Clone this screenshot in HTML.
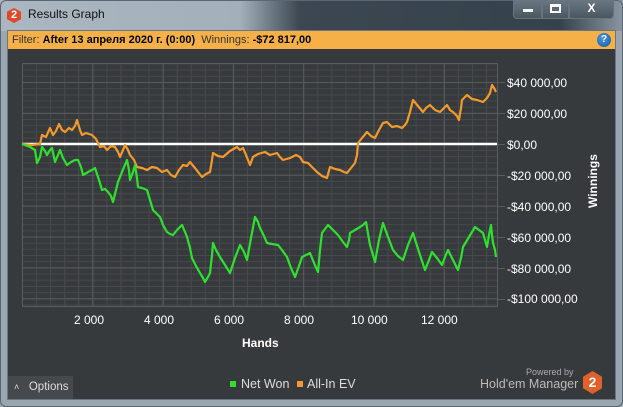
<!DOCTYPE html>
<html><head><meta charset="utf-8"><style>
*{margin:0;padding:0;box-sizing:border-box}
body{width:623px;height:407px;overflow:hidden;background:#9aa6b0;font-family:"Liberation Sans","Noto Sans CJK SC",sans-serif;position:relative}
.title{position:absolute;left:0;top:0;width:623px;height:31px;background:linear-gradient(90deg,#aab6c0 0,#a3afba 240px,#3c4752 300px,#35414c 560px,#8a96a0 623px)}
.frame{position:absolute;left:0;top:0;width:623px;height:407px;border:1px solid #5b6670;border-radius:6px}
.content{position:absolute;left:7px;top:30px;width:609px;height:370px;background:#373a3d;border:1px solid #6a7580}
.filter{position:absolute;left:0;top:0;width:607px;height:18px;background:#f5b048;font-size:11px;line-height:18px;padding-left:4px;color:#333}
.filter b{color:#000;font-weight:bold}
.btn{position:absolute;top:0;height:19px;border:1px solid #6a7480;border-top:none;background:linear-gradient(#6b7884,#4a5662);color:#fff;font-weight:bold;text-align:center;font-size:12px;line-height:17px}
.lbl{position:absolute;color:#fff;font-size:12px}
</style></head><body>
<div class="title"></div>
<div class="frame"></div>
<div style="position:absolute;left:7px;top:8px;width:14px;height:15px;background:#e0482a;clip-path:polygon(50% 0,100% 25%,100% 75%,50% 100%,0 75%,0 25%);color:#fff;font-weight:bold;font-size:11px;text-align:center;line-height:15px">2</div>
<div style="position:absolute;left:28px;top:7px;font-size:12px;color:#111">Results Graph</div>
<div class="btn" style="left:513px;width:29px;border-radius:0 0 0 4px"><div style="margin:9px auto 0;width:10px;height:3px;background:#fff"></div></div>
<div class="btn" style="left:542px;width:27px"><div style="margin:4px auto 0;width:11px;height:9px;border:2px solid #fff;border-top-width:3px"></div></div>
<div class="btn" style="left:569px;width:45px;border-radius:0 0 4px 0">X</div>
<div class="content">
<div class="filter">Filter: <b>After 13 апреля 2020 г. (0:00)</b>&nbsp; Winnings: <b>-$72 817,00</b>
<div style="position:absolute;right:4px;top:2px;width:14px;height:14px;border-radius:50%;background:radial-gradient(circle at 40% 35%,#4a9be0,#1456a0);color:#fff;font-size:10px;font-weight:bold;text-align:center;line-height:14px">?</div></div>
</div>
<svg style="position:absolute;left:0;top:0" width="623" height="407">
<defs>
<pattern id="mn" x="22" y="82" width="14.06" height="6.18" patternUnits="userSpaceOnUse"><path d="M0.5 0V6.18M0 0.5H14.06" stroke="#46494c" stroke-width="1" fill="none"/></pattern>
<pattern id="mj" x="22" y="82" width="70.3" height="30.9" patternUnits="userSpaceOnUse"><path d="M0.5 0V30.9M0 0.5H70.3" stroke="#595c5f" stroke-width="1" fill="none"/></pattern>
</defs>
<rect x="22" y="63" width="475" height="243" fill="url(#mn)"/>
<rect x="22" y="63" width="475" height="243" fill="url(#mj)"/>
<rect x="22.5" y="63.5" width="475" height="243" fill="none" stroke="#595c5f"/>
<g stroke="#595c5f"><path d="M497 82.5h8M497 113.5h8M497 144.5h8M497 175.5h8M497 206.5h8M497 237.5h8M497 268.5h8M497 299.5h8"/></g>
<line x1="22" y1="144" x2="497" y2="144" stroke="#fff" stroke-width="2.5"/>
<polyline fill="none" stroke="#f39a2c" stroke-width="2.2" stroke-linejoin="round" points="22,144 32,145 40,144 42,135 46,137 50,128 53,135 56,131 59,124 62,130 65,132 69,128 72,130 75,126 77,120 80,130 82,135 86,133 92,135 96,139 100,147 104,146 107,150 111,146 115,147 118,152 120,157 123,150 125,145 128,150 130,155 134,160 137,167 142,168 147,170 152,167 157,168 162,172 167,170 171,175 175,177 179,170 183,165 187,166 190,162 195,168 202,177 206,174 210,172 212,160 213,153 218,156 223,157 230,151 237,147 240,150 243,148 246,155 250,165 253,157 258,154 265,152 270,155 277,153 280,157 283,160 290,158 296,155 300,157 303,162 308,163 313,168 317,172 322,176 327,178 330,167 335,169 340,170 344,172 347,173 351,168 355,163 357,155 358,143 362,138 367,132 371,136 375,138 379,130 383,123 387,122 392,127 397,126 402,128 405,125 407,122 410,112 413,100 418,106 423,112 426,108 430,105 435,110 440,112 444,108 447,105 450,110 453,112 457,116 459,120 461,108 462,100 465,97 467,95 472,99 477,100 483,102 487,98 490,93 492,85 494,88 496,92"/>
<polyline fill="none" stroke="#2fe02f" stroke-width="2.2" stroke-linejoin="round" points="22,144 30,147 35,150 37,163 40,157 42,147 45,151 47,155 50,150 52,148 55,162 58,155 60,150 63,158 67,165 71,162 75,160 78,160 81,167 83,175 88,172 92,170 95,168 99,180 102,190 105,189 108,192 111,196 113,202 116,190 118,182 122,172 127,160 129,170 130,180 133,172 135,165 137,178 138,187 142,188 147,190 150,200 153,210 157,214 160,217 163,225 167,232 170,234 173,235 177,230 182,225 185,232 187,237 190,248 192,258 196,266 200,273 203,278 205,282 208,277 210,273 212,255 213,243 216,250 220,257 225,265 230,273 235,258 240,245 244,252 247,260 251,238 255,217 258,222 260,228 264,236 267,243 272,244 278,245 282,250 287,257 291,268 295,277 299,266 302,257 306,255 310,253 314,263 318,272 320,250 322,233 325,229 328,225 333,230 338,235 343,242 347,247 349,240 350,233 355,230 360,227 363,225 366,222 370,245 375,262 379,240 383,223 388,237 393,250 398,256 403,260 408,245 413,233 419,252 425,270 429,260 432,252 437,258 442,265 445,257 448,250 453,260 458,270 461,258 463,247 469,237 475,227 479,230 483,233 485,240 487,247 489,235 491,225 492,235 493,243 495,250 496,257"/>
</svg>
<div class="lbl" style="left:507px;top:76px">$40 000,00</div>
<div class="lbl" style="left:507px;top:107px">$20 000,00</div>
<div class="lbl" style="left:507px;top:138px">$0,00</div>
<div class="lbl" style="left:507px;top:169px">-$20 000,00</div>
<div class="lbl" style="left:507px;top:200px">-$40 000,00</div>
<div class="lbl" style="left:507px;top:231px">-$60 000,00</div>
<div class="lbl" style="left:507px;top:262px">-$80 000,00</div>
<div class="lbl" style="left:507px;top:292px">-$100 000,00</div>
<div class="lbl" style="left:568px;top:176px;font-weight:bold;transform:rotate(-90deg);width:50px;text-align:center">Winnings</div>
<div class="lbl" style="left:74px;top:313px">2 000</div>
<div class="lbl" style="left:144px;top:313px">4 000</div>
<div class="lbl" style="left:214px;top:313px">6 000</div>
<div class="lbl" style="left:284px;top:313px">8 000</div>
<div class="lbl" style="left:351px;top:313px">10 000</div>
<div class="lbl" style="left:421px;top:313px">12 000</div>
<div class="lbl" style="left:242px;top:336px;font-weight:bold">Hands</div>
<div style="position:absolute;left:8px;top:376px;width:65px;height:23px;background:#46494c;color:#ddd;font-size:11.5px;line-height:23px;padding-left:6px"><span style="font-size:9px">˄</span>&nbsp;&nbsp; Options</div>
<div style="position:absolute;left:230px;top:381px;width:6px;height:6px;background:#2fe02f"></div>
<div class="lbl" style="left:241px;top:377px;color:#ddd;font-size:12.5px">Net Won</div>
<div style="position:absolute;left:297px;top:381px;width:6px;height:6px;background:#f39a2c"></div>
<div class="lbl" style="left:307px;top:377px;color:#ddd;font-size:12.5px">All-In EV</div>
<div style="position:absolute;left:526px;top:367px;font-size:9px;color:#aaa">Powered by</div>
<div style="position:absolute;left:480px;top:377px;font-size:12.5px;color:#bbb">Hold'em Manager</div>
<div style="position:absolute;left:583px;top:371px;width:19px;height:23px;background:#e0622a;clip-path:polygon(50% 0,100% 25%,100% 75%,50% 100%,0 75%,0 25%);color:#fff;font-weight:bold;font-size:14px;text-align:center;line-height:23px">2</div>
</body></html>
